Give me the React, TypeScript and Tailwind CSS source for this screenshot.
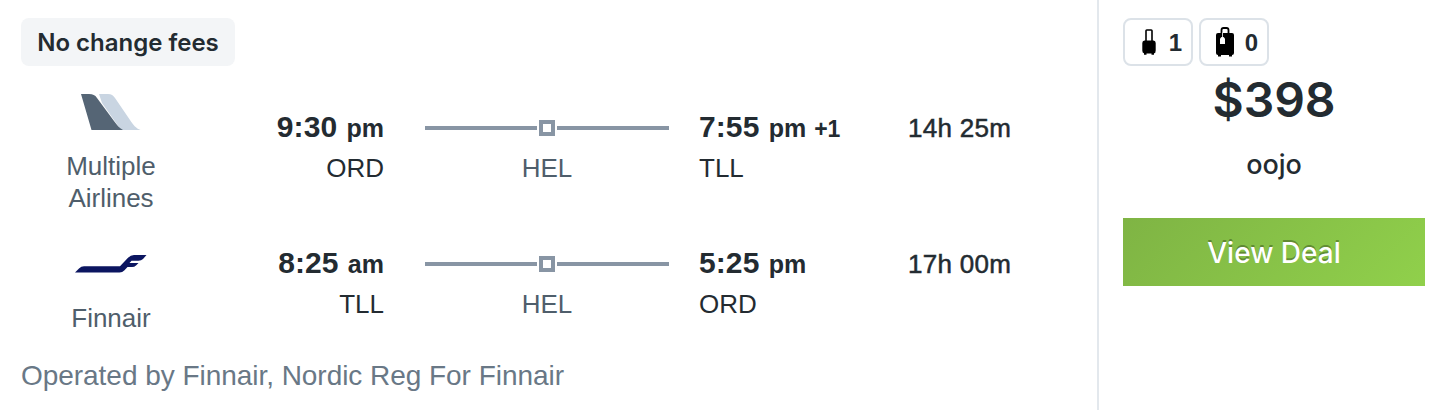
import type { ReactNode } from "react";

type Leg = {
  airline: string;
  logo: ReactNode;
  depart: [string, string];
  from: string;
  via: string;
  arrive: [string, string];
  nextDay?: string;
  to: string;
  duration: string;
};

function TailsLogo() {
  return (
    <svg width="60" height="36" viewBox="0 0 60 36">
      <path d="M18 0h9c3.500 0 5 1.500 7 4l15 22c3 4.500 6 8.500 10.500 10H40L21 9z" fill="#c9d5e2" />
      <path d="M0 0h8c4 0 6 1 8 4l17 23c3 4 5 7 9 9H10.500z" fill="#556575" />
    </svg>
  );
}

function FinnairLogo() {
  return (
    <svg width="72" height="18" viewBox="0 0 72 18">
      <path
        d="M0 17.500L4 13.400Q6.200 11.300 9 11.300H45L53 2.700Q55.700 0 59 0H71.500L68 4Q66.300 5.800 63.500 5.800H56.500L54.500 7.900H63.500L61 10.500Q59.500 12.100 57 12.100H52.500L49.500 15.300Q47.400 17.500 44.500 17.500Z"
        fill="#0b1560"
      />
    </svg>
  );
}

function CarryOnIcon() {
  return (
    <svg width="14" height="26" viewBox="0 0 14 26">
      <path d="M4 12V1.800Q4 1 4.800 1h4.400Q10 1 10 1.800V12" fill="none" stroke="#000" strokeWidth="1.600" />
      <path d="M2.500 11.500h9Q13.700 11.500 13.700 14v7.500Q13.700 24.300 12 24.300V25.700H9.500V24.500h-5V25.700H2V24.300Q0.300 24 0.300 21.500V14Q0.300 11.500 2.500 11.500z" />
    </svg>
  );
}

function CheckedBagIcon() {
  return (
    <svg width="18" height="30" viewBox="0 0 18 30">
      <path d="M5.500 7V3Q5.500 1 7.500 1h3Q12.500 1 12.500 3v4" fill="none" stroke="#000" strokeWidth="1.800" />
      <path d="M2 6h14q2 0 2 2v18q0 2-2 2v1.500h-3V28H5v1.500H2V28q-2 0-2-2V8q0-2 2-2z" />
      <path d="M6.500 5.500v5" stroke="#fff" strokeWidth="0.800" />
      <path d="M4 11.500L5.500 10h2L9 11.500V17H4z" fill="#fff" />
    </svg>
  );
}

const LEGS: Leg[] = [
  {
    airline: "Multiple Airlines",
    logo: <TailsLogo />,
    depart: ["9:30", "pm"],
    from: "ORD",
    via: "HEL",
    arrive: ["7:55", "pm"],
    nextDay: "+1",
    to: "TLL",
    duration: "14h 25m",
  },
  {
    airline: "Finnair",
    logo: <FinnairLogo />,
    depart: ["8:25", "am"],
    from: "TLL",
    via: "HEL",
    arrive: ["5:25", "pm"],
    to: "ORD",
    duration: "17h 00m",
  },
];

function Time({ value }: { value: [string, string] }) {
  return (
    <>
      <span className="mr-0.5 text-[30px] tracking-[0.1px]">{value[0]}</span>{" "}
      <span className="text-[25px]">{value[1]}</span>
    </>
  );
}

function LegRow({ leg }: { leg: Leg }) {
  return (
    <div className="flex h-[136px] text-[26px] leading-10">
      <div className="flex h-[124px] w-[180px] flex-col items-center justify-center text-center leading-8 text-[#4f5e6b]">
        <div className="mb-4 flex h-11 items-center">{leg.logo}</div>
        <div className="w-[120px]">{leg.airline}</div>
      </div>

      <div className="w-[183px] pt-[17px] text-right">
        <div className="h-[41px] font-bold whitespace-nowrap">
          <Time value={leg.depart} />
        </div>
        <div>{leg.from}</div>
      </div>

      <div className="ml-[41px] w-[244px] pt-[30px]">
        <div className="flex h-4 items-center gap-0.5">
          <div className="h-1 flex-1 bg-[#8895a4]" />
          <div className="size-4 border-4 border-[#8895a4] bg-white" />
          <div className="h-1 flex-1 bg-[#8895a4]" />
        </div>
        <div className="mt-3 text-center text-[#4f5e6b]">{leg.via}</div>
      </div>

      <div className="ml-[30px] w-[209px] pt-[17px]">
        <div className="h-[41px] font-bold whitespace-nowrap">
          <Time value={leg.arrive} />
          {leg.nextDay && <span className="ml-2 text-[23px]">{leg.nextDay}</span>}
        </div>
        <div>{leg.to}</div>
      </div>

      <div className="pt-[18px] tracking-[0.3px] whitespace-nowrap [-webkit-text-stroke:0.5px_#232b31]">
        {leg.duration}
      </div>
    </div>
  );
}

function BagCount({ icon, count }: { icon: ReactNode; count: number }) {
  return (
    <div className="flex h-12 w-[70px] items-center justify-between rounded-lg border-2 border-[#dce2e8] pr-[9px] pl-3.5 text-2xl font-bold">
      <span className="flex w-5 justify-center">{icon}</span>
      <span className="pt-0.5">{count}</span>
    </div>
  );
}

export default function App() {
  return (
    <main className="flex h-[410px] w-[1442px] overflow-hidden bg-white font-['Liberation_Sans',Arial,sans-serif] text-[#232b31]">
      <section className="w-[1097px] pt-[18px] pl-[21px]">
        <div className="flex h-12 w-[214px] items-center justify-center rounded-lg bg-[#f3f5f7] pt-0.5 font-[Inter,sans-serif] text-2xl font-semibold whitespace-nowrap">
          No change fees
        </div>
        <div className="mt-6">
          {LEGS.map((leg) => (
            <LegRow key={leg.airline} leg={leg} />
          ))}
        </div>
        <p className="-mt-1 text-[28px] leading-9 tracking-[-0.04px] whitespace-nowrap text-[#697886]">
          Operated by Finnair, Nordic Reg For Finnair
        </p>
      </section>

      <aside className="w-[345px] border-l-2 border-[#e3e8ed] pt-[18px] pr-[17px] pl-6 font-[Inter,sans-serif]">
        <div className="flex gap-1.5 font-['Liberation_Sans',Arial,sans-serif]">
          <BagCount icon={<CarryOnIcon />} count={1} />
          <BagCount icon={<CheckedBagIcon />} count={0} />
        </div>
        <div className="mt-1 text-center text-5xl leading-[60px] font-semibold">$398</div>
        <div className="mt-[15px] text-center text-[27px] leading-10 font-medium">oojo</div>
        <button className="mt-[33px] flex h-[68px] w-full items-center justify-center bg-linear-[135deg,#7fb444,#90d04b] pt-0.5 text-[28px] font-medium text-white [text-shadow:0_-2px_0_rgba(0,0,0,0.3)]">
          View Deal
        </button>
      </aside>
    </main>
  );
}
